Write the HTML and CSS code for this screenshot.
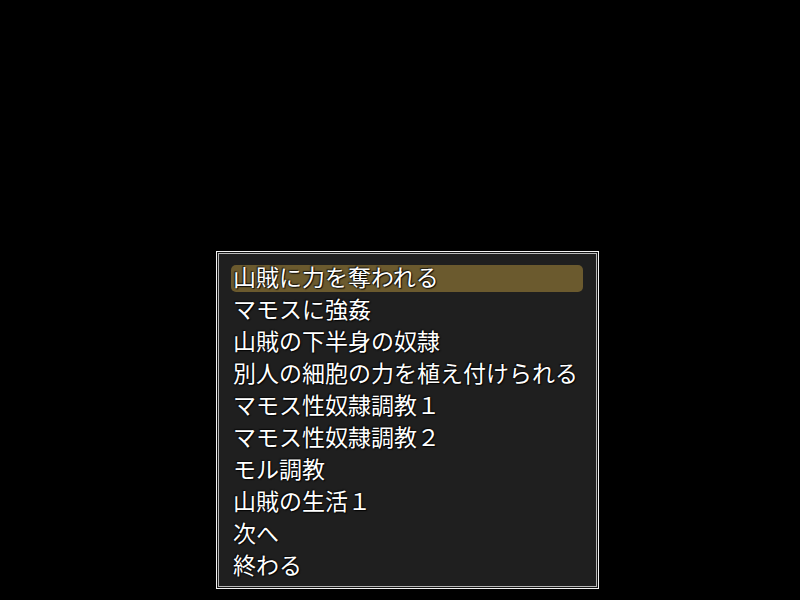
FILE: index.html
```html
<!DOCTYPE html>
<html lang="ja">
<head>
<meta charset="utf-8">
<link rel="stylesheet" href="styles.css">
</head>
<body>
<div class="stage">
  <div class="window">
    <ul class="menu">
      <li class="item selected">山賊に力を奪われる</li>
      <li class="item">マモスに強姦</li>
      <li class="item">山賊の下半身の奴隷</li>
      <li class="item">別人の細胞の力を植え付けられる</li>
      <li class="item">マモス性奴隷調教１</li>
      <li class="item">マモス性奴隷調教２</li>
      <li class="item">モル調教</li>
      <li class="item">山賊の生活１</li>
      <li class="item">次へ</li>
      <li class="item">終わる</li>
    </ul>
  </div>
</div>
</body>
</html>
```
FILE: styles.css
```css
html, body {
  margin: 0;
  padding: 0;
  background: #000;
  width: 800px;
  height: 600px;
  overflow: hidden;
}
.stage {
  padding: 251px 0 0 216px;
}
.window {
  box-sizing: border-box;
  width: 383px;
  height: 338px;
  background: #1f1f1f;
  border: 1px solid #f2f2f2;
  box-shadow: inset 0 0 0 1px #121212, inset 0 0 0 2px #b8b8b8;
  padding: 9px 15px 0 14px;
}
.menu {
  list-style: none;
  margin: 0;
  padding: 0;
  display: flex;
  flex-direction: column;
}
.item {
  position: relative;
  height: 32px;
  line-height: 30px;
  padding-left: 2px;
  font-family: "Noto Sans CJK JP", "Noto Sans", sans-serif;
  font-size: 23px;
  color: #ffffff;
  white-space: nowrap;
  text-shadow: 0 0 2px #000, 1px 1px 1px rgba(0,0,0,0.8), -1px -1px 1px rgba(0,0,0,0.6);
}
.item.selected::before {
  content: "";
  position: absolute;
  left: 0;
  right: 0;
  top: 4px;
  bottom: 1px;
  background: #6b5a2e;
  border-radius: 5px;
  z-index: -1;
}
.menu {
  position: relative;
  z-index: 0;
}
```
